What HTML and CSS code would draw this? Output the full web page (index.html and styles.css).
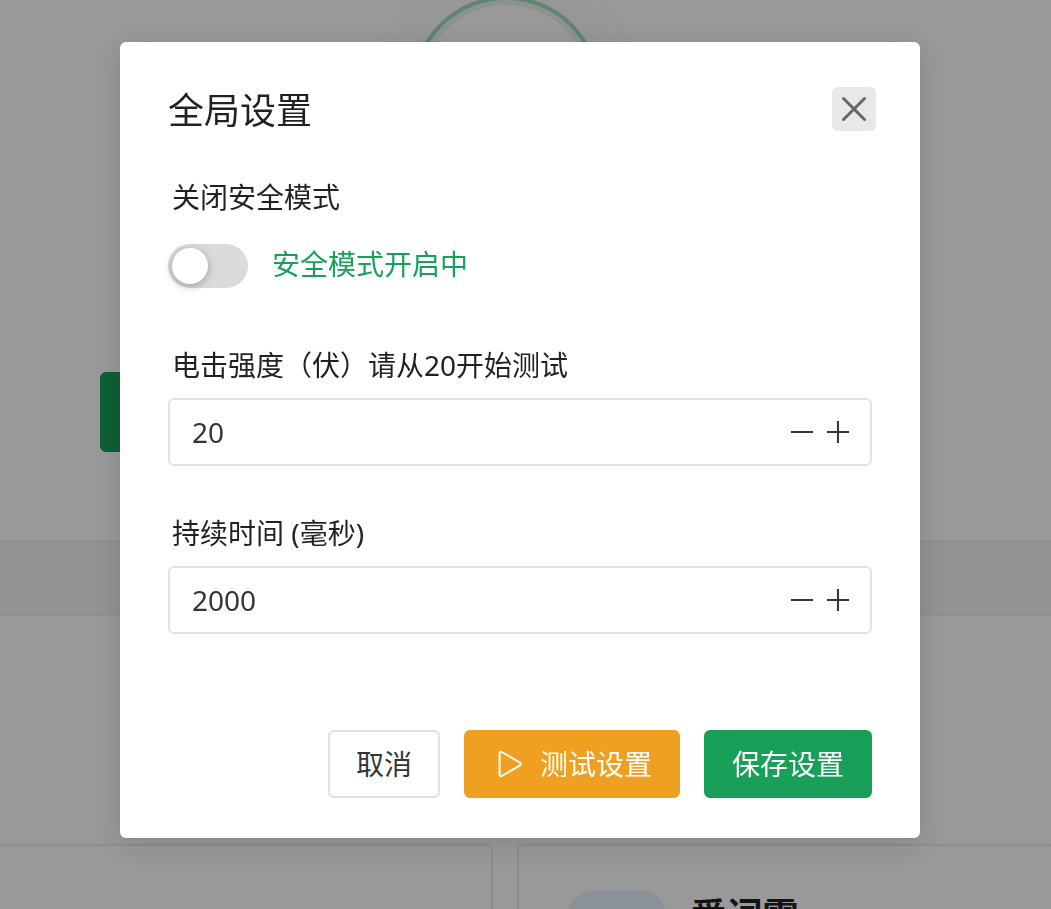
FILE: index.html
```html
<!DOCTYPE html>
<html lang="zh-CN">
  <head>
    <meta charset="UTF-8">
    <title>全局设置</title>
    <meta name="viewport" content="width=device-width, initial-scale=1">
    <link rel="stylesheet" href="styles.css">
  </head>
  <body>
    <div class="page">
      <div class="hero">
        <div class="ring"></div>
        <button class="start" type="button" aria-label="开始"></button>
      </div>
      <div class="bar"></div>
      <div class="cards">
        <div class="card"></div>
        <div class="card">
          <div class="avatar"></div>
          <div class="card-name">爱词霸</div>
        </div>
      </div>
    </div>

    <div class="mask">
      <form class="modal" role="dialog" aria-labelledby="title">
        <div class="modal-header">
          <h1 class="modal-title" id="title">全局设置</h1>
          <button class="close" type="button" aria-label="关闭">
            <svg width="44" height="44" viewBox="0 0 44 44"><path d="M11.5 11.5L32.5 32.5M32.5 11.5L11.5 32.5"/></svg>
          </button>
        </div>

        <div class="item">
          <label class="label" for="safe">关闭安全模式</label>
          <div class="switch-row">
            <input class="switch" type="checkbox" role="switch" id="safe">
            <span class="safe-text">安全模式开启中</span>
          </div>
        </div>

        <div class="item">
          <label class="label" for="strength">电击强度（伏）请从20开始测试</label>
          <div class="number">
            <input class="number-input" type="text" id="strength" value="20">
            <button class="step" type="button" aria-label="减少">
              <svg width="36" height="36" viewBox="0 0 36 36"><path d="M7 18H29"/></svg>
            </button>
            <button class="step" type="button" aria-label="增加">
              <svg width="36" height="36" viewBox="0 0 36 36"><path d="M7 18H29M18 7V29"/></svg>
            </button>
          </div>
        </div>

        <div class="item">
          <label class="label" for="duration">持续时间 (毫秒)</label>
          <div class="number">
            <input class="number-input" type="text" id="duration" value="2000">
            <button class="step" type="button" aria-label="减少">
              <svg width="36" height="36" viewBox="0 0 36 36"><path d="M7 18H29"/></svg>
            </button>
            <button class="step" type="button" aria-label="增加">
              <svg width="36" height="36" viewBox="0 0 36 36"><path d="M7 18H29M18 7V29"/></svg>
            </button>
          </div>
        </div>

        <div class="actions">
          <button class="button" type="button">取消</button>
          <button class="button warning" type="button">
            <svg width="36" height="36" viewBox="0 0 36 36"><path d="M7.6 7.2V28.8C7.6 30 8.8 30.6 9.8 30L28 19.3C29 18.7 29 17.3 28 16.7L9.8 6C8.8 5.4 7.6 6 7.6 7.2Z"/></svg>
            测试设置
          </button>
          <button class="button primary" type="button">保存设置</button>
        </div>
      </form>
    </div>
  </body>
</html>
```

FILE: styles.css
```css
* { box-sizing: border-box; }
body {
  margin: 0;
  font-family: "Noto Sans", "Noto Sans CJK SC", sans-serif;
  font-size: 28px;
  line-height: 40px;
  color: #1f2225;
  background: #fff;
}
button, input { font: inherit; color: #333639; }
button { cursor: pointer; }

/* page behind the dialog */
.page {
  height: 100vh;
  overflow: hidden;
}
.hero {
  display: flex;
  flex-direction: column;
  justify-content: space-between;
  align-items: center;
  height: 540px;
  padding: 0 140px 88px 100px;
}
.ring {
  width: 188px;
  height: 188px;
  margin-top: -4px;
  border: 4px solid #a0dcbc;
  border-radius: 50%;
  box-shadow: inset 0 0 0 5px #e9f5ef, 0 0 60px rgba(24, 160, 88, .06);
}
.start {
  width: 100%;
  height: 80px;
  border: 0;
  border-radius: 6px;
  background: #18a058;
}
.bar {
  height: 76px;
  border-top: 2px solid #efeff5;
  border-bottom: 2px solid #efeff5;
  background: #f5f5f5;
}
.cards {
  display: grid;
  grid-template-columns: 1fr 1fr;
  gap: 24px;
  margin: 228px -4px 0 -46px;
}
.card {
  display: flex;
  gap: 24px;
  height: 188px;
  padding: 44px 48px;
  border: 2px solid #ededed;
  border-radius: 6px;
}
.avatar {
  width: 100px;
  height: 100px;
  border-radius: 28px;
  background: #e6f2ff;
}
.card-name {
  font-size: 36px;
  font-weight: bold;
  line-height: 52px;
}

/* dialog */
.mask {
  position: fixed;
  inset: 0;
  display: flex;
  justify-content: center;
  align-items: flex-start;
  padding: 42px 11px 42px 0;
  overflow: auto;
  background: rgba(0, 0, 0, .4);
}
.modal {
  width: 100%;
  max-width: 800px;
  padding: 40px 48px;
  border-radius: 6px;
  background: #fff;
  box-shadow: 0 6px 32px rgba(0, 0, 0, .15);
}
.modal-header {
  display: flex;
  justify-content: space-between;
  align-items: flex-start;
  margin-bottom: 38px;
}
.modal-title {
  margin: 0;
  font-size: 36px;
  font-weight: normal;
  line-height: 58px;
}
.close {
  width: 44px;
  height: 44px;
  margin: 5px -4px 0 0;
  padding: 0;
  border: 0;
  border-radius: 6px;
  background: #e8e8e8;
}
svg {
  display: block;
  fill: none;
  stroke: currentColor;
  stroke-width: 2;
  stroke-linecap: round;
  stroke-linejoin: round;
}
.close svg {
  stroke: #666;
  stroke-width: 3;
}
.item { margin-bottom: 48px; }
.label {
  display: block;
  padding: 0 0 14px 4px;
  line-height: 38px;
}
.switch-row {
  display: flex;
  align-items: center;
  gap: 24px;
  height: 68px;
}
.switch {
  appearance: none;
  width: 80px;
  height: 44px;
  margin: 4px 0 0;
  padding: 4px;
  border-radius: 22px;
  background: #dbdbdb;
  cursor: pointer;
}
.switch::before {
  content: "";
  display: block;
  width: 36px;
  height: 36px;
  border-radius: 50%;
  background: #fff;
  box-shadow: 0 2px 8px rgba(0, 0, 0, .3);
}
.switch:checked { background: #18a058; }
.switch:checked::before { margin-left: auto; }
.safe-text { color: #18a058; }
.number {
  display: flex;
  align-items: center;
  height: 68px;
  padding: 0 14px 0 22px;
  border: 2px solid #e0e0e6;
  border-radius: 6px;
}
.number-input {
  flex: 1;
  min-width: 0;
  padding: 0;
  border: 0;
  outline: 0;
  background: none;
}
.step {
  padding: 0;
  border: 0;
  background: none;
}
.step svg { stroke-linecap: butt; }
.actions {
  display: flex;
  justify-content: flex-end;
  gap: 24px;
  padding-top: 48px;
}
.button {
  display: flex;
  align-items: center;
  gap: 12px;
  height: 68px;
  padding: 0 26px;
  border: 2px solid #e0e0e6;
  border-radius: 6px;
  background: #fff;
}
.warning {
  color: #fff;
  border-color: #f0a020;
  background: #f0a020;
}
.primary {
  color: #fff;
  border-color: #18a058;
  background: #18a058;
}
```
